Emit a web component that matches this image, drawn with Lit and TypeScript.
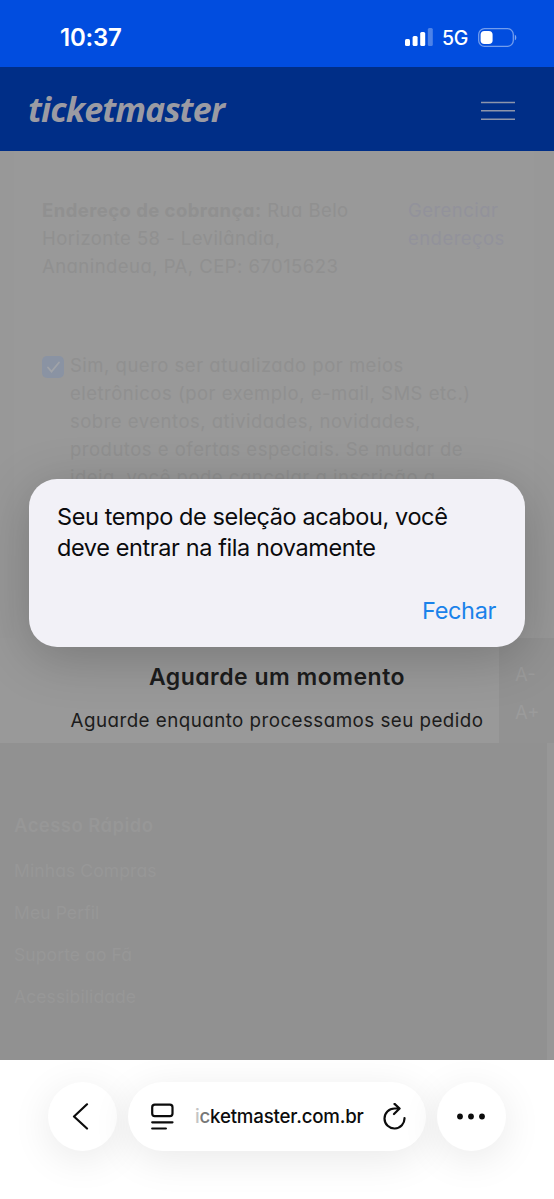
import { LitElement, html, css } from "lit";
import { customElement } from "lit/decorators.js";

const consentLines = [
  "Sim, quero ser atualizado por meios",
  "eletrônicos (por exemplo, e-mail, SMS etc.)",
  "sobre eventos, atividades, novidades,",
  "produtos e ofertas especiais. Se mudar de",
  "ideia, você pode cancelar a inscrição a",
];

const quickLinks = ["Minhas Compras", "Meu Perfil", "Suporte ao Fã", "Acessibilidade"];

@customElement("status-bar")
class StatusBar extends LitElement {
  static styles = css`
    :host { display: flex; height: 67px; background: #014ddf; color: #fff; align-items: center;
      justify-content: space-between; padding: 0 37px 0 60px; box-sizing: border-box;
      font-family: Inter, sans-serif; }
    .time { font-size: 24px; font-weight: 600; line-height: 30px; padding-top: 8px; letter-spacing: -0.2px; }
    .right { display: flex; align-items: center; padding-top: 7px; }
    .net { font-size: 19.5px; line-height: 24px; font-weight: 450; margin: 2px 10px 0 9px; letter-spacing: -0.3px; }
    svg { display: block; }
  `;
  render() {
    return html`
      <div class="time">10:37</div>
      <div class="right">
        <svg width="28" height="18" viewBox="0 0 28 18" fill="#fff">
          <rect x="0" y="11" width="5" height="7" rx="1.5" />
          <rect x="7.6" y="8" width="5" height="10" rx="1.5" />
          <rect x="15.2" y="4" width="5" height="14" rx="1.5" />
          <rect x="22.8" y="0" width="5" height="18" rx="1.5" opacity=".3" />
        </svg>
        <div class="net">5G</div>
        <svg width="39" height="19" viewBox="0 0 39 19">
          <rect x=".7" y=".7" width="34.6" height="17.6" rx="5.8" fill="none" stroke="#fff" stroke-opacity=".45" stroke-width="1.3" />
          <rect x="2.6" y="3" width="12" height="13" rx="3.8" fill="#fff" />
          <path d="M36.8 6.7c2 .8 2 4.800 0 5.600z" fill="#fff" fill-opacity=".5" />
        </svg>
      </div>`;
  }
}

@customElement("site-header")
class SiteHeader extends LitElement {
  static styles = css`
    :host { display: flex; height: 84px; background: #002e87; align-items: center;
      justify-content: space-between; padding: 0 39px 0 28px; box-sizing: border-box; }
    .logo { font: italic 700 34px/40px "Open Sans", sans-serif; color: #9b9ba3; letter-spacing: -.9px; }
    .menu { display: block; margin-top: 3px; }
  `;
  render() {
    return html`<div class="logo">ticketmaster</div>
      <svg class="menu" width="34" height="20" viewBox="0 0 34 20" stroke="#8d95ab" stroke-width="1.6">
        <path d="M0 1.500h34M0 9.800h34M0 18.200h34" />
      </svg>`;
  }
}

@customElement("checkout-page")
class CheckoutPage extends LitElement {
  static styles = css`
    :host { display: flex; flex-direction: column; height: 909px; background: #979797;
      font-family: Inter, sans-serif; font-feature-settings: "cv11"; font-size: 18.5px; line-height: 28px; color: #909090; }
    .content { height: 592px; box-sizing: border-box; display: flex; flex-direction: column; background: #989898; }
    .card { margin: 0 20px 0 14px; padding: 45px 28px 0; background: #999; height: 487px; box-sizing: border-box; }
    .address { display: grid; grid-template-columns: 366px 1fr; white-space: nowrap; letter-spacing: .45px; }
    .manage { color: #92929b; }
    .consent { display: grid; grid-template-columns: 28px 1fr; margin-top: 71px; white-space: nowrap; letter-spacing: .5px; }
    .check { display: block; margin-top: 5px; }
    .bottom { flex: 1; display: flex; }
    .wait { flex: 1; padding-left: 55px; text-align: center; color: #1c1c1c; background: #999; white-space: nowrap; }
    .wait-title { font-size: 23px; font-weight: 600; line-height: 30px; padding-top: 24px; letter-spacing: .5px; }
    .wait-text { font-size: 18.8px; line-height: 28px; padding-top: 15px; letter-spacing: .45px; }
    .sizer { width: 55px; background: #929292; color: #9b9b9b; display: flex; flex-direction: column;
      gap: 10px; padding: 22px 0 0 16px; box-sizing: border-box; }
    .footer { flex: 1; margin-right: 7px; padding: 68px 14px 0; background: #919191; color: #979797; box-sizing: border-box; }
    .foot-title { font-weight: 600; letter-spacing: .45px; margin-bottom: 18px; }
    .link { font-size: 17.5px; margin-bottom: 14px; letter-spacing: .1px; }
  `;
  render() {
    return html`
      <div class="content">
        <div class="card">
          <div class="address">
            <div>
              <b>Endereço de cobrança:</b> Rua Belo<br />Horizonte 58 - Levilândia,<br />Ananindeua, PA, CEP: 67015623
            </div>
            <div class="manage">Gerenciar<br />endereços</div>
          </div>
          <div class="consent">
            <svg class="check" width="22" height="22" viewBox="0 0 22 22">
              <rect width="22" height="22" rx="5" fill="#8a93a3" />
              <path d="M6 11.500l3.500 4L17 6.500" fill="none" stroke="#a0a3a8" stroke-width="1.8" stroke-linecap="round" />
            </svg>
            <div>${consentLines.map((l) => html`<div>${l}</div>`)}</div>
          </div>
        </div>
        <div class="bottom">
          <div class="wait">
            <div class="wait-title">Aguarde um momento</div>
            <div class="wait-text">Aguarde enquanto processamos seu pedido</div>
          </div>
          <div class="sizer"><div>A-</div><div>A+</div></div>
        </div>
      </div>
      <div class="footer">
        <div class="foot-title">Acesso Rápido</div>
        ${quickLinks.map((l) => html`<div class="link">${l}</div>`)}
      </div>`;
  }
}

@customElement("alert-dialog")
class AlertDialog extends LitElement {
  static styles = css`
    :host { display: flex; flex-direction: column; box-sizing: border-box; width: 496px; height: 168px;
      border-radius: 28px; background: #f2f1f7; padding: 22px 29px 0 28px;
      box-shadow: 0 10px 52px rgba(0, 0, 0, .22); font-family: Inter, sans-serif; color: #0b0b0d; }
    .message { font-size: 23.5px; line-height: 31px; letter-spacing: -.4px; white-space: nowrap; }
    .close { align-self: flex-end; font-size: 23.5px; line-height: 30px; margin-top: 33px; color: #1a82ea; letter-spacing: -.35px; }
  `;
  render() {
    return html`<div class="message">Seu tempo de seleção acabou, você<br />deve entrar na fila novamente</div>
      <div class="close">Fechar</div>`;
  }
}

@customElement("browser-bar")
class BrowserBar extends LitElement {
  static styles = css`
    :host { display: flex; height: 139px; background: #fff; box-sizing: border-box; padding: 22px 48px 0;
      gap: 11px; overflow: hidden; font-family: Inter, sans-serif; color: #0c0c0c; }
    .pill { height: 69px; border-radius: 35px; background: #fff; box-shadow: 0 8px 40px rgba(0, 0, 0, .09);
      display: flex; align-items: center; box-sizing: border-box; }
    .round { width: 69px; justify-content: center; flex: none; }
    .address { flex: 1; padding: 0 19px 0 23px; }
    .url { font-size: 18.7px; line-height: 24px; font-weight: 500; margin: 0 auto 0 21px; letter-spacing: -.2px; white-space: nowrap; }
    .fade1 { color: #c4c4c4; }
    .fade2 { color: #777; }
    svg { display: block; fill: none; stroke: #0c0c0c; stroke-linecap: round; stroke-linejoin: round; }
    .back { margin-right: 4px; }
    .more { margin-right: 2px; }
  `;
  render() {
    return html`
      <div class="pill round">
        <svg class="back" width="20" height="28" viewBox="0 0 20 28" stroke-width="2.2"><path d="M16 1.300L3 13.500l13 12" /></svg>
      </div>
      <div class="pill address">
        <svg width="23" height="28" viewBox="0 0 23 28" stroke-width="2.200">
          <rect x="1.200" y="1.600" width="20.300" height="11.600" rx="2.600" />
          <path d="M1.200 19.300h20.300M1.200 25.500h13.700" />
        </svg>
        <div class="url"><span class="fade1">i</span><span class="fade2">c</span>ketmaster.com.br</div>
        <svg width="24" height="28" viewBox="0 0 24 28" stroke-width="2.200">
          <path d="M21.500 15A10 10 0 1 1 11.500 5.500H15.800M11.500 .9L16.600 5.500L11 11" />
        </svg>
      </div>
      <div class="pill round">
        <svg class="more" width="30" height="8" viewBox="0 0 30 8"><g fill="#0c0c0c" stroke="none">
          <circle cx="4" cy="3.500" r="2.900" /><circle cx="15" cy="3.500" r="2.900" /><circle cx="26" cy="3.500" r="2.900" />
        </g></svg>
      </div>`;
  }
}

@customElement("app-root")
class AppRoot extends LitElement {
  static styles = css`
    :host { display: flex; flex-direction: column; position: relative; width: 554px; height: 1199px; overflow: hidden; }
    status-bar, site-header, checkout-page, browser-bar { flex: none; }
    site-header, browser-bar { position: relative; z-index: 2; }
    alert-dialog { position: absolute; left: 29px; top: 479px; z-index: 1; }
  `;
  render() {
    return html`<status-bar></status-bar><site-header></site-header><checkout-page></checkout-page>
      <browser-bar></browser-bar><alert-dialog></alert-dialog>`;
  }
}
